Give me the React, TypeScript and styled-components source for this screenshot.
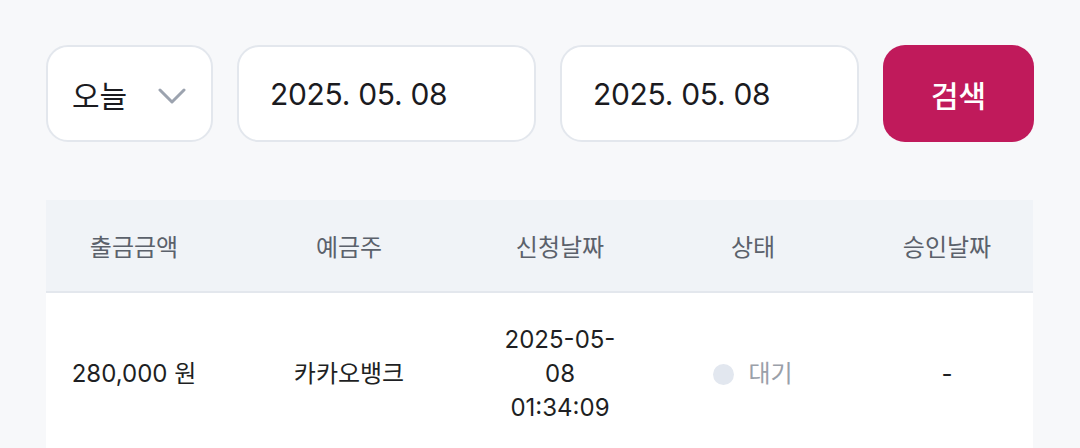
import React from 'react'
import styled, { createGlobalStyle } from 'styled-components'

const GlobalStyle = createGlobalStyle`
    html, body {
        margin: 0;
        padding: 0;
        background: #f7f8fa;
        font-family: Inter, 'Noto Sans CJK KR', sans-serif;
    }
`

const columns = [
    { key: 'amount', title: '출금금액', width: 176 },
    { key: 'holder', title: '예금주', width: 254 },
    { key: 'requested', title: '신청날짜', width: 168 },
    { key: 'status', title: '상태', width: 218 },
    { key: 'approved', title: '승인날짜', width: 170 }
]

const rows = [
    {
        id: 1,
        amount: '280,000 원',
        holder: '카카오뱅크',
        requested: '2025-05-08 01:34:09',
        status: '대기',
        approved: '-'
    }
]

const template = columns.map(c => `${c.width}px`).join(' ')

const ChevronDown = () => (
    <svg width="28" height="18" viewBox="0 0 28 18" fill="none" stroke="#9ca3af" strokeWidth="3" strokeLinecap="round" strokeLinejoin="round">
        <path d="M2 3l12 12 12-12" />
    </svg>
)

export default function App() {
    return (
        <Page>
            <GlobalStyle />
            <FilterBar>
                <PeriodSelect>
                    <span>오늘</span>
                    <ChevronDown />
                </PeriodSelect>
                <DateField>2025. 05. 08</DateField>
                <DateField>2025. 05. 08</DateField>
                <SearchButton>검색</SearchButton>
            </FilterBar>
            <Table>
                <HeaderRow>
                    {columns.map(col => (
                        <HeaderCell key={col.key}>{col.title}</HeaderCell>
                    ))}
                </HeaderRow>
                {rows.map(row => (
                    <BodyRow key={row.id}>
                        <Cell>{row.amount}</Cell>
                        <Cell>{row.holder}</Cell>
                        <Cell>{row.requested}</Cell>
                        <Cell>
                            <Status>
                                <Dot />
                                {row.status}
                            </Status>
                        </Cell>
                        <Cell>{row.approved}</Cell>
                    </BodyRow>
                ))}
            </Table>
        </Page>
    )
}

const Page = styled.div`
    padding: 45px 46px 0 46px;
    width: 988px;
`

const FilterBar = styled.div`
    display: flex;
    gap: 24px;
    margin-bottom: 58px;
`

const Box = styled.div`
    box-sizing: border-box;
    height: 97px;
    display: flex;
    align-items: center;
    background: #fff;
    border: 2px solid #e3e7ed;
    border-radius: 22px;
    font-size: 30px;
    color: #1b1b1f;
`

const PeriodSelect = styled(Box)`
    width: 167px;
    padding: 0 25px 0 24px;
    justify-content: space-between;

    svg {
        margin-top: 4px;
    }
`

const DateField = styled(Box)`
    width: 299px;
    padding-left: 31px;
    letter-spacing: -0.3px;
`

const SearchButton = styled.button`
    width: 151px;
    height: 97px;
    border: none;
    border-radius: 22px;
    background: #c01a5b;
    color: #fff;
    font-family: inherit;
    font-size: 30px;
    font-weight: 500;
`

const Table = styled.div`
    width: 987px;
`

const HeaderRow = styled.div`
    display: grid;
    grid-template-columns: ${template};
    height: 91px;
    background: #f0f3f7;
    border-bottom: 2px solid #e3e7ed;
`

const HeaderCell = styled.div`
    display: flex;
    align-items: center;
    justify-content: center;
    font-size: 24px;
    color: #5b616b;
`

const BodyRow = styled.div`
    display: grid;
    grid-template-columns: ${template};
    min-height: 162px;
    background: #fff;
`

const Cell = styled.div`
    display: flex;
    align-items: center;
    justify-content: center;
    padding: 0 24px;
    text-align: center;
    font-size: 24px;
    line-height: 34px;
    color: #1e1f23;
`

const Status = styled.span`
    display: inline-flex;
    align-items: center;
    gap: 14px;
    color: #9aa0a9;
`

const Dot = styled.span`
    width: 21px;
    height: 21px;
    border-radius: 50%;
    background: #e2e7ef;
`
